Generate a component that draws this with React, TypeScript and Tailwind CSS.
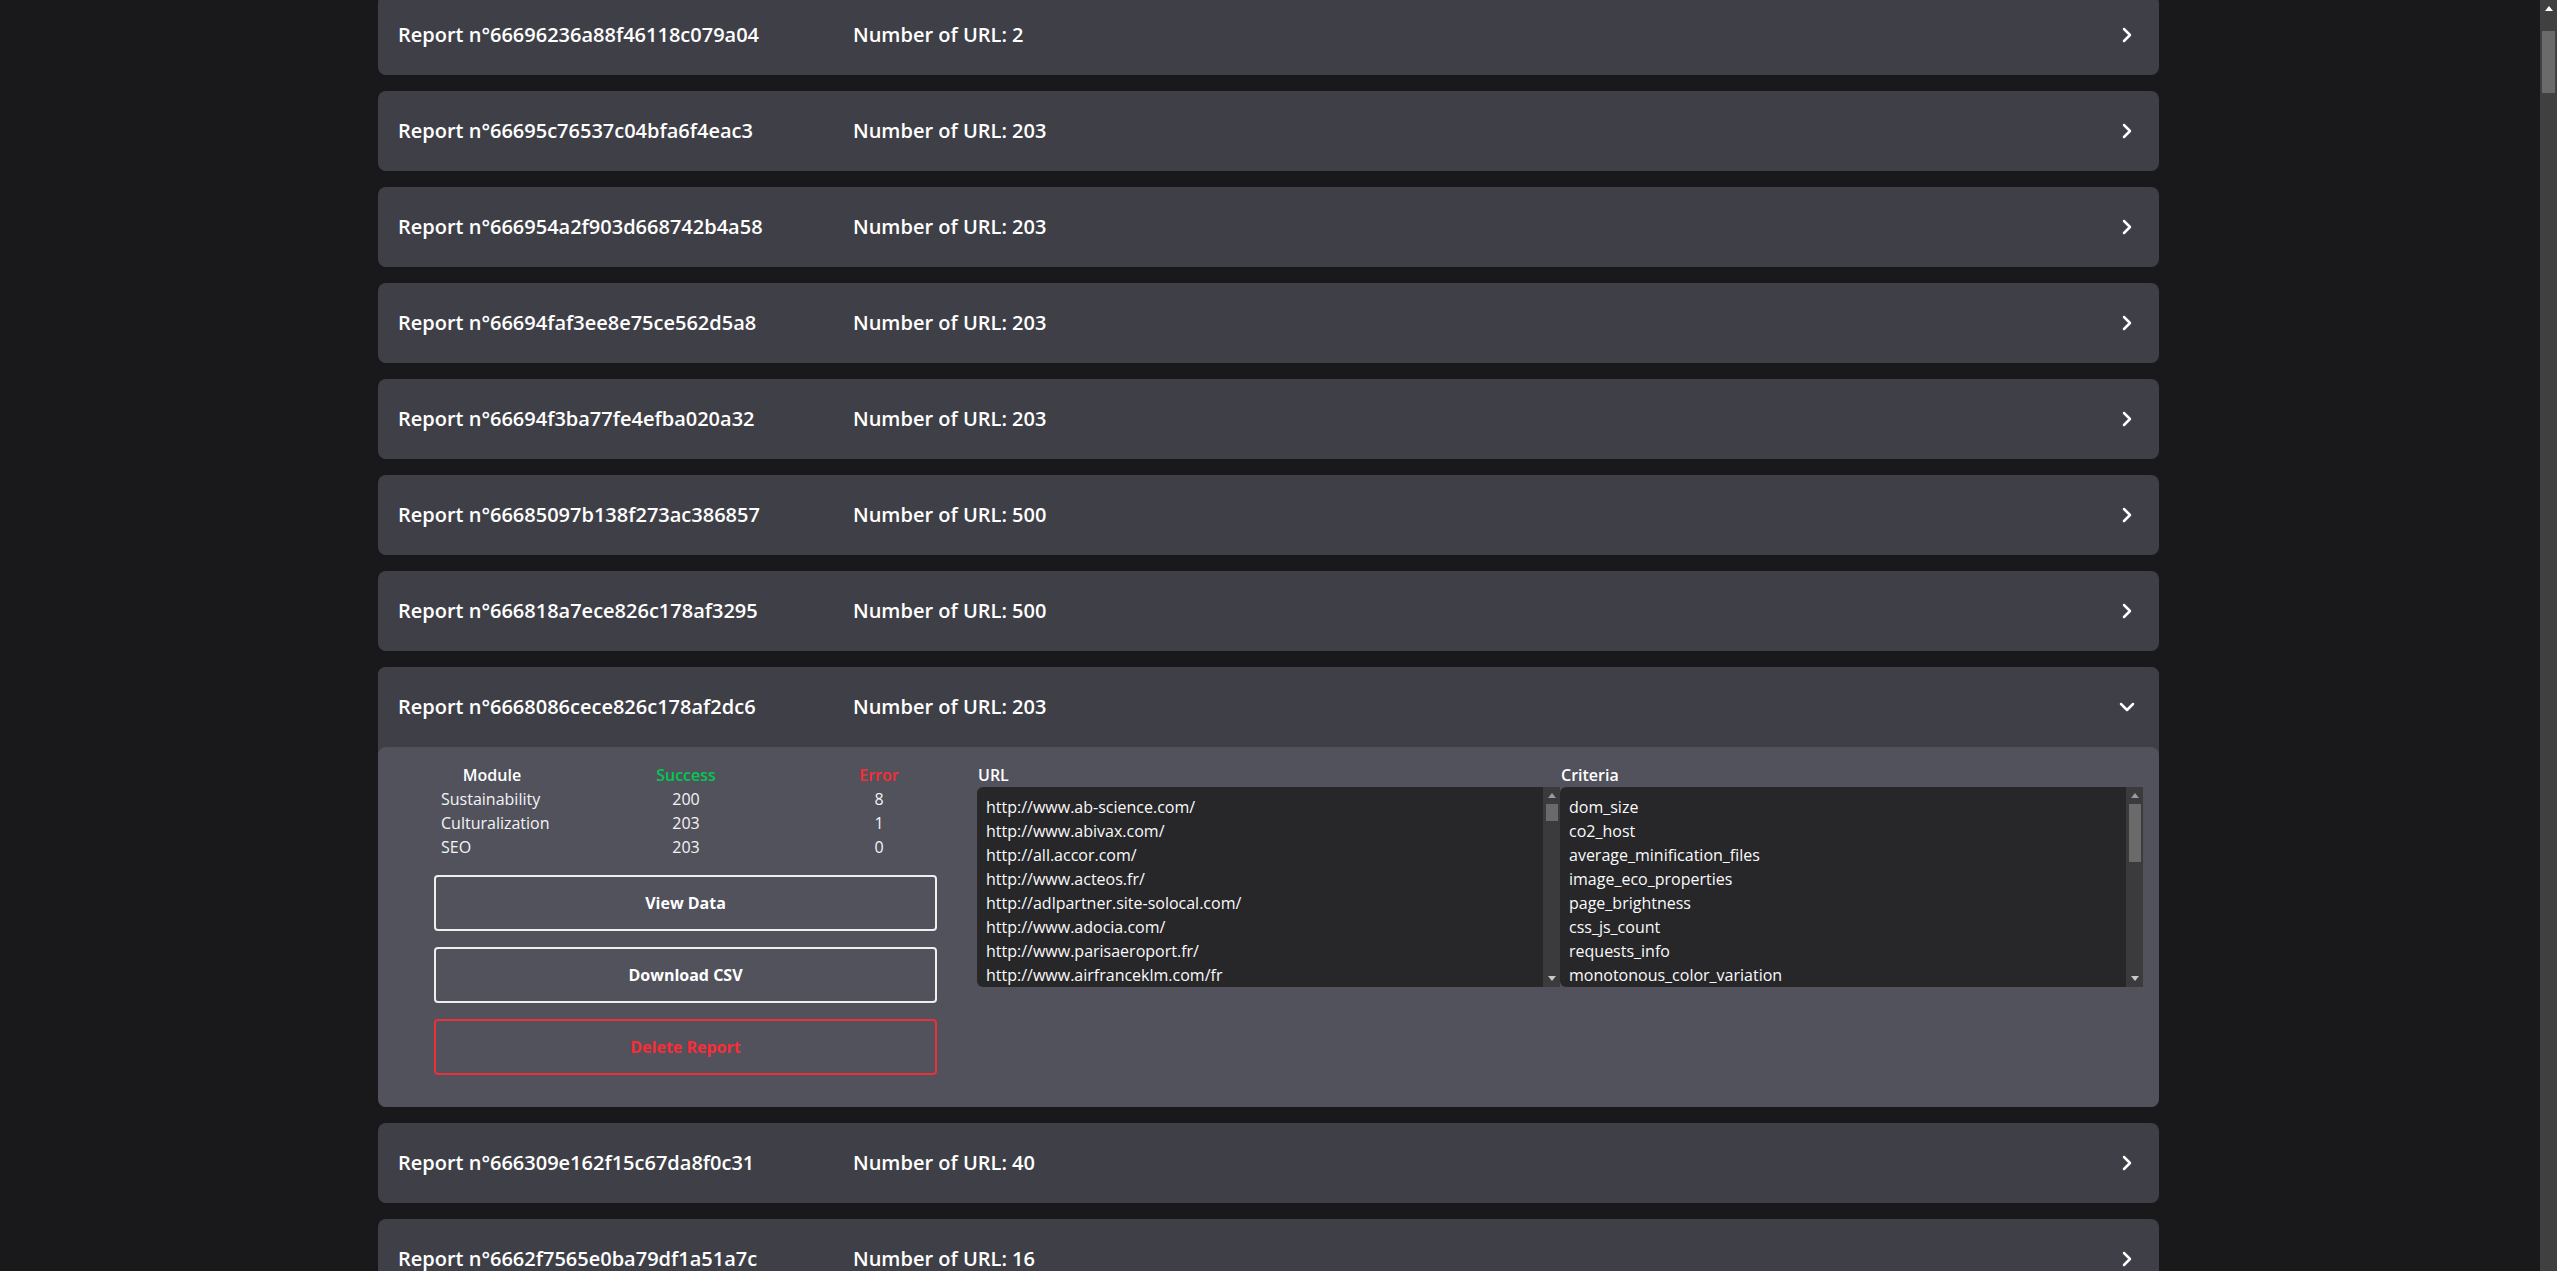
import React from "react";
import { ChevronRight, ChevronDown } from "lucide-react";

const reports: { id: string; n: number; open?: boolean }[] = [
  { id: "66696236a88f46118c079a04", n: 2 },
  { id: "66695c76537c04bfa6f4eac3", n: 203 },
  { id: "666954a2f903d668742b4a58", n: 203 },
  { id: "66694faf3ee8e75ce562d5a8", n: 203 },
  { id: "66694f3ba77fe4efba020a32", n: 203 },
  { id: "66685097b138f273ac386857", n: 500 },
  { id: "666818a7ece826c178af3295", n: 500 },
  { id: "6668086cece826c178af2dc6", n: 203, open: true },
  { id: "666309e162f15c67da8f0c31", n: 40 },
  { id: "6662f7565e0ba79df1a51a7c", n: 16 },
];

const urls = [
  "http://www.ab-science.com/",
  "http://www.abivax.com/",
  "http://all.accor.com/",
  "http://www.acteos.fr/",
  "http://adlpartner.site-solocal.com/",
  "http://www.adocia.com/",
  "http://www.parisaeroport.fr/",
  "http://www.airfranceklm.com/fr",
  "http://www.akwel.com/",
  "http://www.albioma.com/",
];

const criteria = [
  "dom_size",
  "co2_host",
  "average_minification_files",
  "image_eco_properties",
  "page_brightness",
  "css_js_count",
  "requests_info",
  "monotonous_color_variation",
  "font_count",
  "lazy_loading",
];

function Tri({ up, color }: { up?: boolean; color: string }) {
  return (
    <svg width="8" height="5" viewBox="0 0 8 5" className="block">
      {up ? <polygon points="4,0 8,5 0,5" fill={color} /> : <polygon points="0,0 8,0 4,5" fill={color} />}
    </svg>
  );
}

function ListBox({ items, thumb }: { items: string[]; thumb: number }) {
  return (
    <div className="flex h-[200px]">
      <div className="flex-1 bg-zinc-800 rounded-l-md px-[9px] py-2 overflow-hidden">
        {items.map((t) => (
          <div key={t} className="text-base leading-6 text-zinc-50 whitespace-nowrap">
            {t}
          </div>
        ))}
      </div>
      <div className="w-[17px] bg-[#3b3b3d] flex flex-col items-center">
        <div className="h-[17px] flex items-center justify-center">
          <Tri up color="#9b9b9b" />
        </div>
        <div className="w-[12px] bg-[#6a6a6a]" style={{ height: thumb }} />
        <div className="flex-1" />
        <div className="h-[17px] flex items-center justify-center">
          <Tri color="#c8c8c8" />
        </div>
      </div>
    </div>
  );
}

function Header({ id, n, open }: { id: string; n: number; open?: boolean }) {
  return (
    <div className="h-20 flex items-center pl-5 pr-5 bg-zinc-700 rounded-lg text-white text-xl font-semibold">
      <div className="w-[455px]">Report n°{id}</div>
      <div>Number of URL: {n}</div>
      <div className="flex-1" />
      {open ? <ChevronDown size={24} strokeWidth={2.5} /> : <ChevronRight size={24} strokeWidth={2.5} />}
    </div>
  );
}

function Details() {
  const rows = [
    ["Sustainability", "200", "8"],
    ["Culturalization", "203", "1"],
    ["SEO", "203", "0"],
  ];
  return (
    <div className="bg-zinc-600 rounded-lg grid grid-cols-3 pt-4 px-4 pb-8 text-white">
      <div className="flex flex-col">
        <div className="ml-[47px] grid grid-cols-[102px_100px_100px] gap-x-[93px] text-base leading-6">
          <div className="text-center font-semibold">Module</div>
          <div className="text-center font-semibold text-green-500">Success</div>
          <div className="text-center font-semibold text-red-500">Error</div>
          {rows.map((r) => (
            <React.Fragment key={r[0]}>
              <div className="whitespace-nowrap text-zinc-100">{r[0]}</div>
              <div className="text-center text-zinc-100">{r[1]}</div>
              <div className="text-center text-zinc-100">{r[2]}</div>
            </React.Fragment>
          ))}
        </div>
        <div className="mx-10 mt-4 flex flex-col gap-4">
          <button className="h-14 border-2 border-white/90 rounded text-base font-bold text-white">View Data</button>
          <button className="h-14 border-2 border-white/90 rounded text-base font-bold text-white">Download CSV</button>
          <button className="h-14 border-2 border-red-500/90 rounded text-base font-bold text-red-500">Delete Report</button>
        </div>
      </div>
      <div className="flex flex-col">
        <div className="text-base leading-6 font-semibold pl-px">URL</div>
        <ListBox items={urls} thumb={17} />
      </div>
      <div className="flex flex-col">
        <div className="text-base leading-6 font-semibold pl-px">Criteria</div>
        <ListBox items={criteria} thumb={58} />
      </div>
    </div>
  );
}

export default function App() {
  return (
    <div className="h-screen w-full overflow-hidden flex bg-[#19191b] font-['Open_Sans',sans-serif]">
      <div className="flex-1 overflow-hidden">
        <div className="w-[1781px] ml-[378px] -mt-[5px] flex flex-col gap-4">
          {reports.map((r) =>
            r.open ? (
              <div key={r.id} className="bg-zinc-700 rounded-lg">
                <Header id={r.id} n={r.n} open />
                <Details />
              </div>
            ) : (
              <Header key={r.id} id={r.id} n={r.n} />
            )
          )}
        </div>
      </div>
      <div className="w-[17px] bg-[#404040] flex flex-col items-center">
        <div className="h-[17px] flex items-center justify-center">
          <Tri up color="#ffffff" />
        </div>
        <div className="mt-[14px] w-[13px] h-[62px] bg-[#6a6a6a]" />
      </div>
    </div>
  );
}
